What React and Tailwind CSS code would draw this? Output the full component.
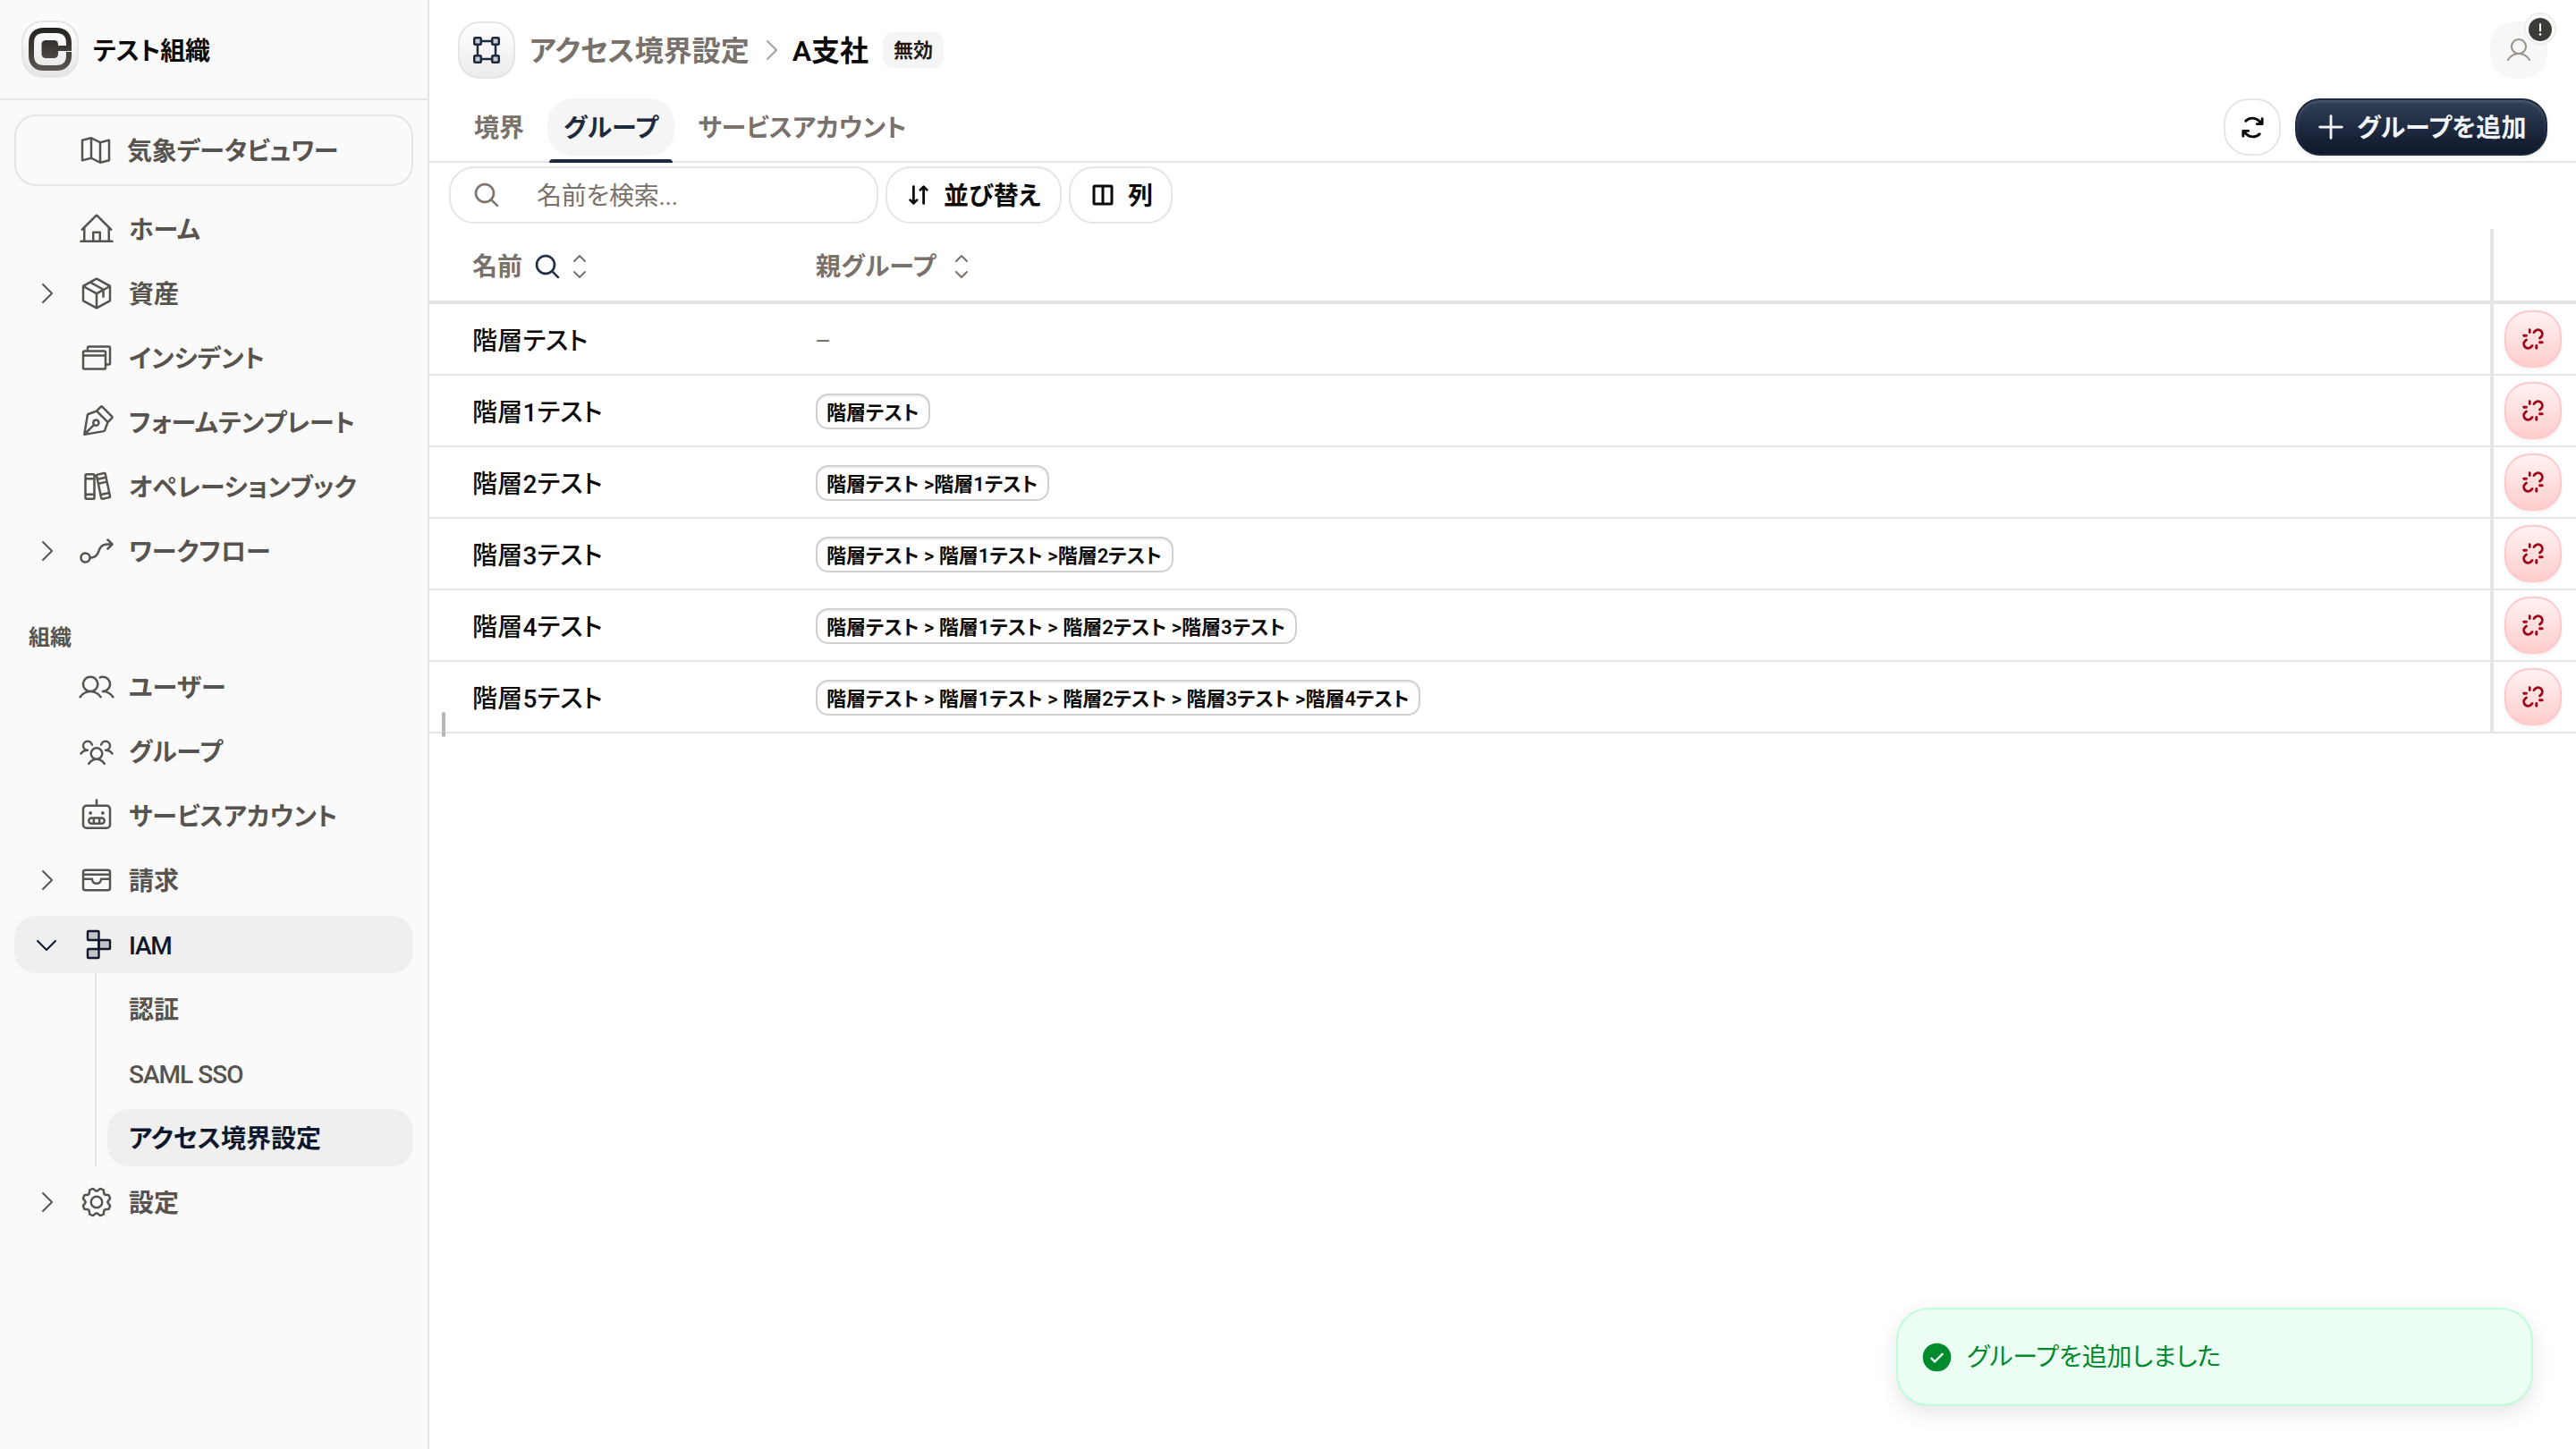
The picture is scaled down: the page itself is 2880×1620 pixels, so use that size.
import React from 'react';
import {
  PiMapTrifold,
  PiHouseLine,
  PiPackage,
  PiBrowsers,
  PiPenNib,
  PiBooks,
  PiFlowArrow,
  PiUsers,
  PiUsersThree,
  PiRobot,
  PiCardholder,
  PiGear,
  PiCaretRight,
  PiCaretDown,
  PiCaretUpDown,
  PiBoundingBoxDuotone,
  PiUser,
  PiArrowsClockwiseBold,
  PiPlus,
  PiMagnifyingGlass,
  PiArrowsDownUpBold,
  PiSquareSplitHorizontalBold,
  PiLinkBreakBold,
  PiCheckCircleFill,
} from 'react-icons/pi';

const IamIcon = ({ className }) => (
  <svg viewBox="0 0 40 40" className={className} stroke="currentColor" strokeWidth="2.400" strokeLinejoin="round">
    <g fill="currentColor" fillOpacity="0.2">
      <rect x="10" y="5" width="12.500" height="10" rx="0.800" />
      <rect x="22.500" y="15" width="12.500" height="10" rx="0.800" />
      <rect x="10" y="25" width="12.500" height="10" rx="0.800" />
    </g>
    <path d="M22.500 14V26" />
  </svg>
);

const mainItems = [
  { label: 'ホーム', icon: PiHouseLine },
  { label: '資産', icon: PiPackage, expandable: true },
  { label: 'インシデント', icon: PiBrowsers },
  { label: 'フォームテンプレート', icon: PiPenNib },
  { label: 'オペレーションブック', icon: PiBooks },
  { label: 'ワークフロー', icon: PiFlowArrow, expandable: true },
];

const orgItems = [
  { label: 'ユーザー', icon: PiUsers },
  { label: 'グループ', icon: PiUsersThree },
  { label: 'サービスアカウント', icon: PiRobot },
  { label: '請求', icon: PiCardholder, expandable: true },
  { label: 'IAM', icon: IamIcon, expandable: true, open: true, latin: true },
];

const iamItems = [
  { label: '認証' },
  { label: 'SAML SSO', latin: true },
  { label: 'アクセス境界設定', active: true },
];

const groups = [
  { name: '階層テスト', parent: null },
  { name: '階層1テスト', parent: '階層テスト' },
  { name: '階層2テスト', parent: '階層テスト >階層1テスト' },
  { name: '階層3テスト', parent: '階層テスト > 階層1テスト >階層2テスト' },
  { name: '階層4テスト', parent: '階層テスト > 階層1テスト > 階層2テスト >階層3テスト' },
  { name: '階層5テスト', parent: '階層テスト > 階層1テスト > 階層2テスト > 階層3テスト >階層4テスト' },
];

const NavItem = ({ label, icon: Icon, expandable, open, latin }) => {
  const Caret = open ? PiCaretDown : PiCaretRight;
  return (
    <button
      className={`flex h-16 w-full shrink-0 items-center rounded-3xl pl-5 ${
        open ? 'bg-[#efefef] text-[#0f172b]' : 'text-[#57534e]'
      }`}
    >
      <span className="mr-5 flex size-8 items-center justify-center">
        {expandable && <Caret className="size-8" />}
      </span>
      <Icon className="mr-4 size-10" />
      <span className={latin ? 'pt-[3px] font-medium tracking-[-0.045em]' : 'pt-1'}>{label}</span>
    </button>
  );
};

const Logo = () => (
  <div className="flex size-16 items-center justify-center rounded-3xl border-2 border-[#e5e5e5] bg-linear-to-b from-white to-[#e5e5e5]">
    <svg viewBox="0 0 48 48" className="size-12">
      <defs>
        <linearGradient id="logo" x1="0" y1="0" x2="0" y2="48" gradientUnits="userSpaceOnUse">
          <stop offset="0" stopColor="#25211d" />
          <stop offset="1" stopColor="#5a5650" />
        </linearGradient>
      </defs>
      <path
        d="M45 21V17C45 8 40 3 31 3H17C8 3 3 8 3 17V31C3 40 8 45 17 45H31C40 45 45 40 45 31V27"
        fill="none"
        stroke="url(#logo)"
        strokeWidth="6"
      />
      <rect x="14.500" y="14" width="18.500" height="20" rx="4.500" fill="url(#logo)" />
      <rect x="31" y="20" width="17" height="6" fill="url(#logo)" />
    </svg>
  </div>
);

const Sidebar = () => (
  <aside className="flex w-[480px] shrink-0 flex-col border-r-2 border-[#e5e5e5] bg-[#fafafa] font-semibold">
    <div className="flex h-28 shrink-0 items-center gap-4 border-b-2 border-[#e5e5e5] px-6 text-[#0c0a09]">
      <Logo />
      <span className="pt-[5px] tracking-[-0.005em]">テスト組織</span>
    </div>

    <nav className="flex flex-col px-4 pt-4">
      <button className="mb-4 flex h-20 items-center rounded-3xl border-2 border-[#e5e5e5] pl-[69px] text-[#57534e]">
        <PiMapTrifold className="mr-[15px] size-10" />
        <span className="pt-1 tracking-[-0.007em]">気象データビュワー</span>
      </button>

      <div className="flex flex-col gap-2">
        {mainItems.map(item => (
          <NavItem key={item.label} {...item} />
        ))}
      </div>

      <div className="flex h-[88px] items-end px-4 pb-[3px] text-2xl leading-10 text-[#57534e]">組織</div>

      <div className="flex flex-col gap-2">
        {orgItems.map(item => (
          <NavItem key={item.label} {...item} />
        ))}
      </div>

      {/* IAM children */}
      <div className="mb-2 ml-[90px] flex flex-col gap-2 border-l-2 border-[#e5e5e5] pt-2 pl-3">
        {iamItems.map(item => (
          <button
            key={item.label}
            className={`flex h-16 items-center rounded-3xl pl-6 ${
              item.active ? 'bg-[#efefef] text-[#0f172b]' : 'text-[#57534e]'
            }`}
          >
            <span className={item.latin ? 'pt-[3px] font-medium tracking-[-0.035em]' : 'pt-1'}>{item.label}</span>
          </button>
        ))}
      </div>

      <NavItem label="設定" icon={PiGear} expandable />
    </nav>
  </aside>
);

const Header = () => (
  <header className="flex h-28 shrink-0 items-center px-8">
    <div className="flex size-16 items-center justify-center rounded-3xl border-2 border-[#e5e5e5] bg-linear-to-b from-white to-[#ebebeb] text-[#1d293d]">
      <PiBoundingBoxDuotone className="size-10" />
    </div>
    <span className="ml-4 pt-0.5 text-[32px] font-semibold text-[#79716b]">アクセス境界設定</span>
    <PiCaretRight className="mx-2 size-8 text-[#a6a09b]" />
    <span className="pt-0.5 text-[32px] font-semibold text-[#0c0a09]">A支社</span>
    <span className="ml-4 flex h-10 items-center rounded-xl bg-[#f5f5f5] px-3 pt-0.5 text-[22px] font-semibold text-[#1c1917]">
      無効
    </span>
    <div className="relative ml-auto flex size-16 items-center justify-center rounded-[28px] bg-[#f7f7f7] text-[#98928c]">
      <PiUser className="size-8" />
      <span className="absolute -top-2.5 -right-2.5 flex size-9 items-center justify-center rounded-full border-2 border-[#eeeeee] bg-white pt-px">
        <span className="flex size-[26px] items-center justify-center rounded-full bg-[#3b3b38]">
          <svg viewBox="0 0 4 14" className="h-3.5 w-1">
            <path d="M2 1V8.500" stroke="white" strokeWidth="2" strokeLinecap="round" />
            <circle cx="2" cy="12.500" r="1.300" fill="white" />
          </svg>
        </span>
      </span>
    </div>
  </header>
);

const Tabs = () => (
  <div className="-mt-0.5 flex h-[72px] shrink-0 items-start border-b-2 border-[#e5e5e5] px-8 font-semibold text-[#79716b]">
    <div className="flex">
      <button className="h-16 px-[18px] pt-1">境界</button>
      <div className="relative mx-2">
        <button className="h-16 rounded-[28px] bg-[#f5f5f5] px-[18px] pt-1 tracking-[0.01em] text-[#1d293d]">
          グループ
        </button>
        <span className="absolute inset-x-0.5 top-[68px] h-1 rounded-t bg-[#1d293d]" />
      </div>
      <button className="h-16 px-[18px] pt-1">サービスアカウント</button>
    </div>
    <div className="ml-auto flex gap-4">
      <button className="flex size-16 items-center justify-center rounded-[28px] border-2 border-[#e5e5e5] text-[#0c0a09]">
        <PiArrowsClockwiseBold className="size-[31px]" />
      </button>
      <button className="flex h-16 w-[282px] items-center rounded-[28px] border-2 border-[#1d293d] bg-linear-to-b from-[#314158] to-[#0f172b] pl-5 text-[#f1f5f9] shadow-[inset_0_2px_3px_rgba(255,255,255,0.15),0_2px_4px_rgba(0,0,0,0.08)]">
        <PiPlus className="mr-[11px] size-9" strokeWidth="4" />
        <span className="pt-1 tracking-[0.01em]">グループを追加</span>
      </button>
    </div>
  </div>
);

const Toolbar = () => (
  <div className="flex shrink-0 gap-2 pt-1 pb-1.5 pl-[22px] font-semibold text-[#0c0a09]">
    <div className="flex h-16 w-[480px] items-center rounded-[28px] border-2 border-[#e5e5e5] pl-6 font-normal text-[#79716b]">
      <PiMagnifyingGlass className="mr-10 size-8" stroke="currentColor" strokeWidth="5" />
      <span className="pt-1 tracking-[-0.01em]">名前を検索...</span>
    </div>
    <button className="flex h-16 w-[197px] items-center rounded-[28px] border-2 border-[#e5e5e5] pl-5">
      <PiArrowsDownUpBold className="mr-[13px] size-[30px]" />
      <span className="pt-1 tracking-[0.01em]">並び替え</span>
    </button>
    <button className="flex h-16 w-[116px] items-center rounded-[28px] border-2 border-[#e5e5e5] pl-5">
      <PiSquareSplitHorizontalBold className="mr-3 size-8" />
      <span className="pt-1">列</span>
    </button>
  </div>
);

const GroupTable = () => (
  <div className="flex flex-col">
    <div className="flex h-[84px] border-b-4 border-[#e5e5e5] font-semibold text-[#79716b]">
      <div className="flex w-[432px] items-center pt-1 pl-12">
        <span className="pt-0.5">名前</span>
        <PiMagnifyingGlass className="ml-3 size-8 text-[#1d293d]" stroke="currentColor" strokeWidth="5" />
        <PiCaretUpDown className="ml-1 size-8" />
      </div>
      <div className="flex flex-1 items-center pt-1">
        <span className="pt-0.5 tracking-[0.01em]">親グループ</span>
        <PiCaretUpDown className="ml-3 size-8" />
      </div>
      <div className="w-24 border-l-4 border-[#e5e5e5]" />
    </div>

    {groups.map(group => (
      <div key={group.name} className="flex h-20 border-b-2 border-[#e5e5e5] text-[#0c0a09]">
        <div className="flex w-[432px] items-center pt-1.5 pl-12 font-medium tracking-[0.01em]">{group.name}</div>
        <div className="flex flex-1 items-center pt-0.5">
          {group.parent ? (
            <span className="flex h-10 items-center rounded-[14px] border-2 border-[#d0d0d0] pt-[3px] pr-[11px] pl-2.5 text-[22px] font-semibold shadow-[inset_0_2px_2px_rgba(0,0,0,0.06)]">
              {group.parent}
            </span>
          ) : (
            <span className="-ml-px pt-1 text-[#79716b]">–</span>
          )}
        </div>
        <div className="flex w-24 items-center border-l-4 border-[#e5e5e5] pl-3">
          <button className="flex size-16 items-center justify-center rounded-[28px] border-2 border-[#ffc9c9] bg-linear-to-b from-[#fef2f2] to-[#ffcccc] text-[#a0001c] shadow-[0_2px_4px_rgba(0,0,0,0.06)]">
            <PiLinkBreakBold className="size-[30px]" />
          </button>
        </div>
      </div>
    ))}
  </div>
);

const Toast = () => (
  <div className="absolute right-12 bottom-12 flex h-[110px] w-[712px] items-center rounded-[36px] border-2 border-[#bffcd9] bg-[#ecfdf3] pl-6 text-[#008a2e] shadow-[0_8px_24px_rgba(0,0,0,0.1)]">
    <PiCheckCircleFill className="mr-3.5 size-[39px]" />
    <span className="pt-0.5 tracking-[-0.003em]">グループを追加しました</span>
  </div>
);

export default function App() {
  return (
    <div className="relative flex h-screen w-full overflow-hidden bg-white font-[Roboto,'Noto_Sans_CJK_JP',sans-serif] text-[28px] leading-none [font-feature-settings:'palt']">
      <Sidebar />
      <main className="relative flex min-w-0 flex-1 flex-col">
        <Header />
        <Tabs />
        <Toolbar />
        <GroupTable />
        {/* Sidebar resize handle */}
        <span className="absolute top-[796px] left-3.5 h-7 w-1 rounded-full bg-[#bab5b0]" />
      </main>
      <Toast />
    </div>
  );
}
